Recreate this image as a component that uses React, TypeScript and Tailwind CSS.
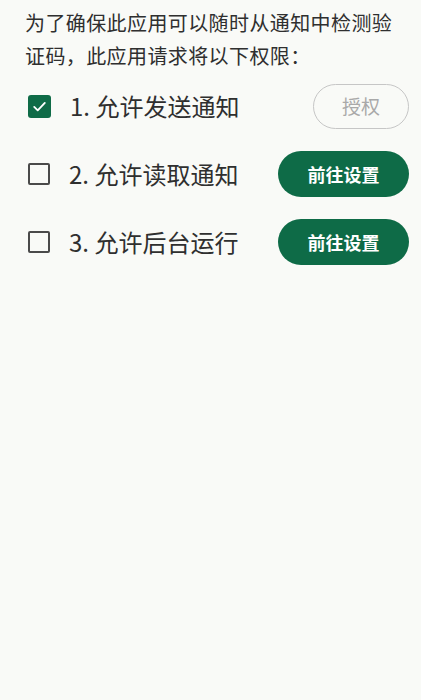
import { useState } from 'react'

interface Permission {
  id: number
  label: string
  granted: boolean
}

const initialPermissions: Permission[] = [
  { id: 1, label: '允许发送通知', granted: true },
  { id: 2, label: '允许读取通知', granted: false },
  { id: 3, label: '允许后台运行', granted: false },
]

function CheckBox({ checked }: { checked: boolean }) {
  if (checked) {
    return (
      <div className="w-[23px] h-[23px] rounded-[3px] bg-[#0f6b47] flex items-center justify-center shrink-0">
        <svg width="17" height="17" viewBox="0 0 24 24" fill="none">
          <path d="M4.5 12.5l5 5L19.5 7" stroke="#fff" strokeWidth="2.6" strokeLinecap="round" strokeLinejoin="round" />
        </svg>
      </div>
    )
  }
  return <div className="w-[22px] h-[22px] rounded-[2px] border-2 border-[#4a4a4a] shrink-0" />
}

export default function App() {
  const [permissions] = useState(initialPermissions)

  return (
    <div
      className="min-h-[700px] w-full bg-[#f9faf7] text-[#2f2f2f]"
      style={{ fontFamily: '"Noto Sans CJK SC", "Noto Sans", sans-serif' }}
    >
      <p className="pl-[25px] pr-[20px] pt-[6px] text-[20px] leading-[33px] tracking-[0.4px]">
        为了确保此应用可以随时从通知中检测验证码，此应用请求将以下权限：
      </p>

      <div className="flex flex-col pl-[28px] pr-[12px]">
        {permissions.map(p => (
          <div key={p.id} className="h-[68px] flex items-center">
            <CheckBox checked={p.granted} />
            <span className="ml-[19px] flex-1 text-[24px] leading-none">
              {p.id}. {p.label}
            </span>
            {p.granted ? (
              <button className="w-[96px] h-[45px] rounded-full border-[1.5px] border-[#c6c6c6] text-[#a9a9a9] text-[19px]">
                授权
              </button>
            ) : (
              <button className="w-[131px] h-[46px] rounded-full bg-[#0e6b47] text-white text-[18px] font-semibold">
                前往设置
              </button>
            )}
          </div>
        ))}
      </div>
    </div>
  )
}
